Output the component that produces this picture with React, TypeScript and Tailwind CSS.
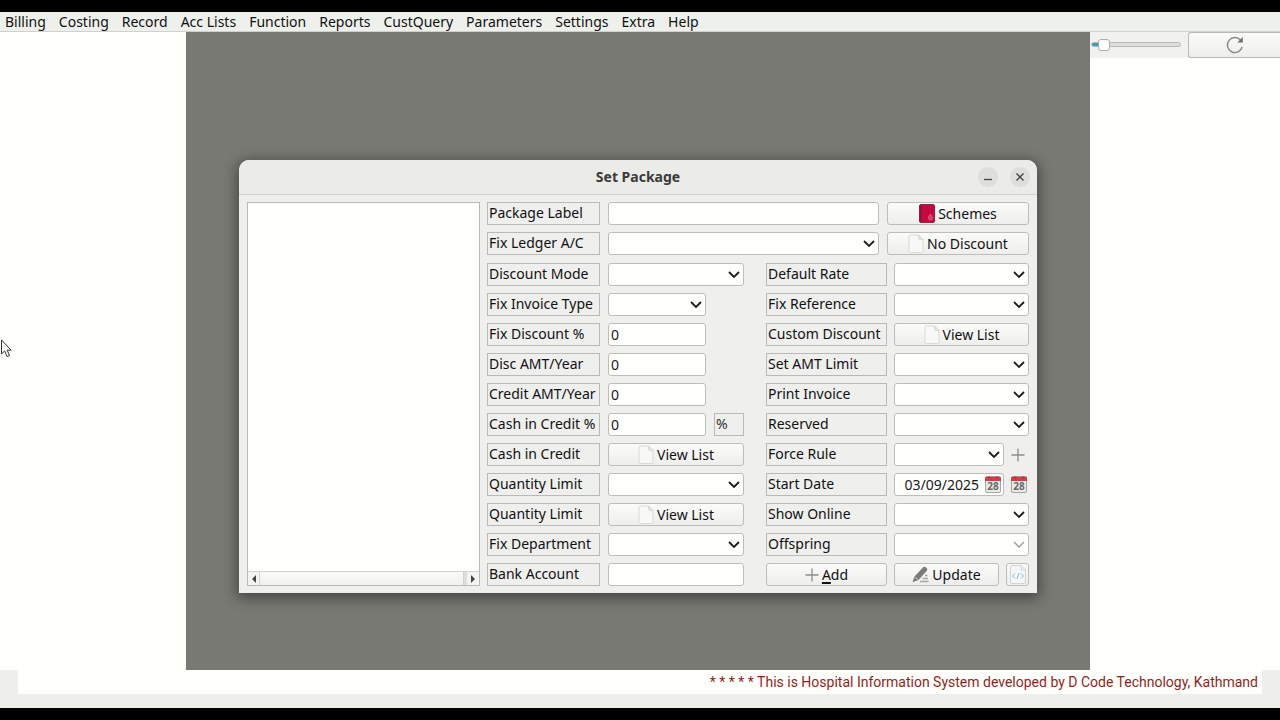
import type { ReactNode } from "react";
import clsx from "clsx";

const MENU = [
  "Billing", "Costing", "Record", "Acc Lists", "Function", "Reports",
  "CustQuery", "Parameters", "Settings", "Extra", "Help",
];

const FRAME = "h-[23px] border border-[#b9b9b6]";
const FIELD = "h-[23px] w-full min-w-0 rounded-[3px] border border-[#bdbdba] bg-[#fffffd] text-sm text-[#181818] outline-none";

function PageIcon() {
  return (
    <svg width="16" height="20" viewBox="0 0 16 20" className="shrink-0">
      <path d="M2.5 1h8L15 5.5V17a1.5 1.5 0 0 1-1.5 1.5h-11A1.5 1.5 0 0 1 1 17V2.5A1.5 1.5 0 0 1 2.5 1z" fill="#f8f8f7" stroke="#d9d9d7" />
      <path d="M10.5 1v3.5a1 1 0 0 0 1 1H15z" fill="#e6e6e4" stroke="#d9d9d7" />
    </svg>
  );
}

function BookIcon() {
  return (
    <svg width="16" height="20" viewBox="0 0 16 20" className="shrink-0">
      <rect x="0.5" y="0.5" width="15" height="18" rx="1.5" fill="#c4093f" stroke="#8f2847" />
      <path d="M1.5 1v17" stroke="#8d1236" strokeWidth="1.5" />
      <path d="M11.5 10c-1.6 2-2 3-2 4a2 2 0 0 0 4 0c0-1-.6-2-2-4z" fill="#da3a66" stroke="#e66d8e" strokeWidth="0.7" />
    </svg>
  );
}

function PlusIcon() {
  return (
    <svg width="14" height="14" viewBox="0 0 14 14" className="shrink-0">
      <path d="M7 .5v13M.5 7h13" stroke="#8d8d8b" strokeWidth="1.3" />
    </svg>
  );
}

function PencilIcon() {
  return (
    <svg width="17" height="17" viewBox="0 0 17 17" className="shrink-0">
      <path d="M.5 16.200l1.800-5.400L11.200 1.200c1.400-1.300 5 1 3.800 3.200L6.500 14z" fill="#7b7b79" />
      <path d="M2.300 10.800L6.500 14" stroke="#dededc" strokeWidth="0.8" />
      <path d="M13 9.500h2.500M10.500 12.500h5.500M8 15.500h8.500" stroke="#a5a5a3" strokeWidth="1.5" />
    </svg>
  );
}

function CalendarIcon() {
  return (
    <svg width="16" height="17" viewBox="0 0 16 17" className="shrink-0">
      <rect x="0.5" y="1" width="15" height="15.5" rx="1.5" fill="#e9e9e9" stroke="#a3a3a1" />
      <path d="M0 5V2A1.500 1.500 0 0 1 1.500.5h13A1.500 1.500 0 0 1 16 2v3z" fill="#cf4046" />
      <path d="M4 .5v2M12 .5v2" stroke="#8c2b30" />
      <text x="8" y="14" textAnchor="middle" fontSize="10" fontWeight="700" fill="#6a6a68">28</text>
    </svg>
  );
}

function CodeIcon() {
  return (
    <svg width="16" height="19" viewBox="0 0 16 19" className="shrink-0">
      <path d="M2 .5h9L15.500 5v12a1.500 1.500 0 0 1-1.500 1.500H2A1.500 1.500 0 0 1 .5 17V2A1.500 1.500 0 0 1 2 .5z" fill="#f4f6f8" stroke="#d0d3d6" />
      <path d="M11 .5V5h4.500" fill="none" stroke="#d0d3d6" />
      <path d="M5 8.500l-2.500 2.500L5 13.500M11 8.500l2.500 2.500-2.500 2.500M9 8l-2 6" fill="none" stroke="#90b6dc" />
    </svg>
  );
}

function Caption({ id, children, muted }: { id: string; children: ReactNode; muted?: boolean }) {
  return (
    <label htmlFor={id} className={clsx(FRAME, "block overflow-hidden whitespace-nowrap pl-px leading-5", muted && "text-[#333]")}>
      {children}
    </label>
  );
}

function Select({ id, disabled }: { id: string; disabled?: boolean }) {
  return (
    <div className="relative w-full">
      <select id={id} disabled={disabled} className={clsx(FIELD, "block appearance-none pl-1 pr-6")}>
        <option value="" />
      </select>
      <svg width="12" height="8" viewBox="0 0 12 8" className="pointer-events-none absolute right-1 top-2">
        <path d="M1 1l5 5 5-5" fill="none" stroke={disabled ? "#9a9a98" : "#1c1c1c"} strokeWidth={disabled ? 1.3 : 1.8} />
      </svg>
    </div>
  );
}

function TextBox({ id, value = "" }: { id: string; value?: string }) {
  return <input id={id} type="text" defaultValue={value} className={clsx(FIELD, "block pl-0.5")} />;
}

function PushButton({ id, icon, children, label }: { id?: string; icon: ReactNode; children?: ReactNode; label?: string }) {
  return (
    <button
      id={id}
      type="button"
      aria-label={label}
      className="flex h-[23px] w-full items-center justify-center gap-[3px] overflow-hidden whitespace-nowrap rounded-[3px] border border-[#bdbdba] bg-linear-to-b from-[#fbfbfa] to-[#eeeeec]"
    >
      {icon}
      {children && <span>{children}</span>}
    </button>
  );
}

function ViewList({ id }: { id: string }) {
  return <PushButton id={id} icon={<PageIcon />}>View List</PushButton>;
}

// caption + control, the grid columns come from the parent
function Row({ id, caption, children }: { id: string; caption: string; children: ReactNode }) {
  return (
    <>
      <Caption id={id}>{caption}</Caption>
      {children}
    </>
  );
}

function Narrow({ children }: { children: ReactNode }) {
  return <div className="grid grid-cols-[98px_30px] gap-2">{children}</div>;
}

function WithAction({ children }: { children: ReactNode }) {
  return <div className="grid grid-cols-[1fr_18px] items-center gap-[7px]">{children}</div>;
}

function PackageForm() {
  return (
    <form className="flex min-w-0 flex-1 flex-col gap-2">
      <div className="grid grid-cols-[113px_1fr_142px] gap-x-2 gap-y-[7px]">
        <Row id="label" caption="Package Label"><TextBox id="label" /></Row>
        <PushButton icon={<BookIcon />}>Schemes</PushButton>
        <Row id="ledger" caption="Fix Ledger A/C"><Select id="ledger" /></Row>
        <PushButton icon={<PageIcon />}>No Discount</PushButton>
      </div>

      <div className="grid grid-cols-[257fr_263fr] gap-x-[22px]">
        <div className="grid grid-cols-[113px_1fr] gap-x-2 gap-y-[7px]">
          <Row id="mode" caption="Discount Mode"><Select id="mode" /></Row>
          <Row id="invoice" caption="Fix Invoice Type"><Narrow><Select id="invoice" /></Narrow></Row>
          <Row id="disc" caption="Fix Discount %"><Narrow><TextBox id="disc" value="0" /></Narrow></Row>
          <Row id="discYear" caption="Disc AMT/Year"><Narrow><TextBox id="discYear" value="0" /></Narrow></Row>
          <Row id="creditYear" caption="Credit AMT/Year"><Narrow><TextBox id="creditYear" value="0" /></Narrow></Row>
          <Row id="cashPct" caption="Cash in Credit %">
            <Narrow>
              <TextBox id="cashPct" value="0" />
              <Caption id="cashPct" muted>%</Caption>
            </Narrow>
          </Row>
          <Row id="cash" caption="Cash in Credit"><ViewList id="cash" /></Row>
          <Row id="qty" caption="Quantity Limit"><Select id="qty" /></Row>
          <Row id="qtyList" caption="Quantity Limit"><ViewList id="qtyList" /></Row>
          <Row id="dept" caption="Fix Department"><Select id="dept" /></Row>
          <Row id="bank" caption="Bank Account"><TextBox id="bank" /></Row>
        </div>

        <div className="grid grid-cols-[121px_1fr] gap-[7px]">
          <Row id="rate" caption="Default Rate"><Select id="rate" /></Row>
          <Row id="ref" caption="Fix Reference"><Select id="ref" /></Row>
          <Row id="custom" caption="Custom Discount"><ViewList id="custom" /></Row>
          <Row id="limit" caption="Set AMT Limit"><Select id="limit" /></Row>
          <Row id="print" caption="Print Invoice"><Select id="print" /></Row>
          <Row id="reserved" caption="Reserved"><Select id="reserved" /></Row>
          <Row id="rule" caption="Force Rule">
            <WithAction>
              <Select id="rule" />
              <button type="button" aria-label="Add rule"><PlusIcon /></button>
            </WithAction>
          </Row>
          <Row id="start" caption="Start Date">
            <WithAction>
              <div className={clsx(FIELD, "flex items-center gap-[6px] pr-0.5")}>
                <input id="start" type="text" defaultValue="03/09/2025" className="w-0 flex-1 bg-transparent text-right outline-none" />
                <CalendarIcon />
              </div>
              <button type="button" aria-label="Pick date"><CalendarIcon /></button>
            </WithAction>
          </Row>
          <Row id="online" caption="Show Online"><Select id="online" /></Row>
          <Row id="offspring" caption="Offspring"><Select id="offspring" disabled /></Row>
          <PushButton icon={<PlusIcon />}><span className="underline decoration-2 underline-offset-2">A</span>dd</PushButton>
          <div className="grid grid-cols-[1fr_23px] gap-[7px]">
            <PushButton icon={<PencilIcon />}>Update</PushButton>
            <PushButton icon={<CodeIcon />} label="Script" />
          </div>
        </div>
      </div>
    </form>
  );
}

function PackageList() {
  return (
    <div className="flex w-[233px] shrink-0 flex-col border border-[#b9b9b6] bg-[#fffffd]">
      <div className="flex-1" />
      <div className="flex h-[14px] border-t border-[#d2d2cf] bg-[#f4f4f2]">
        <button type="button" aria-label="Scroll left" className="flex w-3 items-center justify-center border-r border-[#d2d2cf]">
          <svg width="4" height="8" viewBox="0 0 4 8"><path d="M4 0v8L0 4z" fill="#444" /></svg>
        </button>
        <div className="flex-1 bg-linear-to-b from-[#fafaf8] to-[#f1f1ef]" />
        <div className="w-1 border-l border-[#d2d2cf] bg-[#dededb]" />
        <button type="button" aria-label="Scroll right" className="flex w-3 items-center justify-center">
          <svg width="4" height="8" viewBox="0 0 4 8"><path d="M0 0v8l4-4z" fill="#444" /></svg>
        </button>
      </div>
    </div>
  );
}

function PackageDialog() {
  return (
    <section role="dialog" aria-labelledby="title" className="mx-auto w-full max-w-[798px] rounded-t-[10px] bg-[#efefed] shadow-[0_3px_14px_2px_rgba(0,0,0,0.45)]">
      <header className="grid h-[35px] grid-cols-[1fr_auto_1fr] items-center rounded-t-[10px] border-b border-[#d0d0cd] bg-[#ebebe8] px-[7px]">
        <h1 id="title" className="col-start-2 text-sm font-bold text-[#3a3a3a]">Set Package</h1>
        <div className="flex justify-end gap-3">
          <button type="button" aria-label="Minimize" className="flex size-5 items-center justify-center rounded-full bg-[#dededb]">
            <svg width="8" height="8" viewBox="0 0 8 8"><path d="M0 6.500h8" stroke="#444" strokeWidth="1.3" /></svg>
          </button>
          <button type="button" aria-label="Close" className="flex size-5 items-center justify-center rounded-full bg-[#dededb]">
            <svg width="8" height="8" viewBox="0 0 8 8"><path d="M.5.5l7 7M7.500.5l-7 7" stroke="#444" strokeWidth="1.4" /></svg>
          </button>
        </div>
      </header>
      <div className="flex gap-[7px] px-2 py-[7px]">
        <PackageList />
        <PackageForm />
      </div>
    </section>
  );
}

function Toolbar() {
  return (
    <div className="flex h-[26px] gap-[7px] bg-[#f1f1ef] pl-px">
      <input
        type="range"
        aria-label="Zoom"
        defaultValue={8}
        className="mt-[10px] h-[5px] w-[90px] appearance-none rounded-full border border-[#b9b9b6] bg-linear-to-r from-[#3d9ac4] from-10% to-[#dededb] to-10% [&::-webkit-slider-thumb]:size-3 [&::-webkit-slider-thumb]:appearance-none [&::-webkit-slider-thumb]:rounded-[3px] [&::-webkit-slider-thumb]:border [&::-webkit-slider-thumb]:border-[#adadaa] [&::-webkit-slider-thumb]:bg-white"
      />
      <button type="button" aria-label="Refresh" className="flex flex-1 items-center justify-center rounded-l-[3px] border border-r-0 border-[#b9b9b6] bg-linear-to-b from-[#fbfbfa] to-[#eeeeec]">
        <svg width="18" height="18" viewBox="0 0 18 18">
          <path d="M14.500 4A7.500 7.500 0 1 0 16.200 11" fill="none" stroke="#858583" strokeWidth="1.4" />
          <path d="M16.800 1v5.500h-5.500z" fill="#6f6f6d" />
        </svg>
      </button>
    </div>
  );
}

export default function App() {
  return (
    <div className="relative flex min-h-screen flex-col border-y-[12px] border-black bg-[#fffffc] font-['Noto_Sans','Open_Sans',sans-serif] text-sm text-[#111]">
      <nav className="flex h-5 items-center gap-[13px] border-b border-[#d0d0cd] bg-[#eef0ec] pl-[5px]">
        {MENU.map((item) => (
          <button key={item} type="button" className="whitespace-nowrap leading-[18px]">{item}</button>
        ))}
      </nav>

      <div className="flex flex-1">
        <div className="w-[186px] shrink-0" />
        <main className="flex-1 bg-[#797974] px-4 pb-[77px] pt-32">
          <PackageDialog />
        </main>
        <aside className="w-[190px] shrink-0">
          <Toolbar />
        </aside>
      </div>

      <footer className="bg-[#eeeeeb] px-[18px] pb-[14px]">
        <p className="h-6 overflow-hidden whitespace-nowrap bg-[#fffffc] pr-1 text-right font-['Roboto','Noto_Sans',sans-serif] text-sm leading-6 text-[#931f22]">
          * * * * * This is Hospital Information System developed by D Code Technology, Kathmand
        </p>
      </footer>

      {/* mouse pointer */}
      <svg width="12" height="19" viewBox="0 0 12 19" className="pointer-events-none absolute left-0 top-[327px]">
        <path d="M1.500 1v14l3.200-3 2.300 5.500 2.500-1-2.300-5.300h4z" fill="#fff" stroke="#333" />
      </svg>
    </div>
  );
}
